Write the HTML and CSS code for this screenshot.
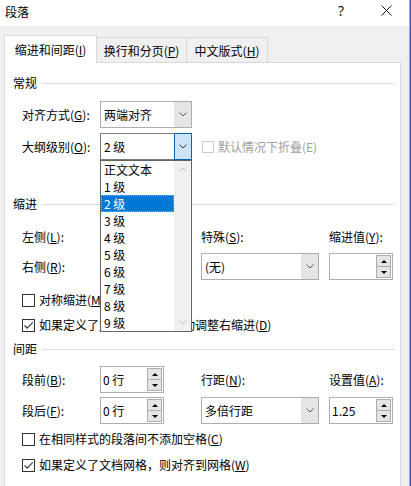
FILE: index.html
```html
<!DOCTYPE html>
<html lang="zh-CN">
<head>
<meta charset="utf-8">
<title>段落</title>
<link rel="stylesheet" href="styles.css">
</head>
<body>
<div class="dialog">
  <div class="titlebar">
    <span class="title">段落</span>
    <span class="tbtn help">?</span>
    <span class="tbtn close"><svg width="11" height="11" viewBox="0 0 11 11"><path d="M0.5 0.5L10.5 10.5M10.5 0.5L0.5 10.5" stroke="#111" stroke-width="1"/></svg></span>
  </div>
  <div class="client">
    <div class="tabs">
      <div class="tab active t1">缩进和间距(<u>I</u>)</div>
      <div class="tab t2">换行和分页(<u>P</u>)</div>
      <div class="tab t3">中文版式(<u>H</u>)</div>
    </div>
    <div class="panel">
      <div class="ghead"><span>常规</span><i></i></div>

      <div class="row r-align">
        <span class="lbl">对齐方式(<u>G</u>):</span>
        <div class="combo w92"><span class="val">两端对齐</span><span class="dd"><svg width="8" height="5" viewBox="0 0 8 5"><path d="M0.5 0.5L4 4L7.5 0.5" fill="none" stroke="#5c5c5c"/></svg></span></div>
      </div>

      <div class="row r-level">
        <span class="lbl">大纲级别(<u>O</u>):</span>
        <div class="combo w92 focus">
          <span class="val">2 级</span><span class="dd"><svg width="8" height="5" viewBox="0 0 8 5"><path d="M0.5 0.5L4 4L7.5 0.5" fill="none" stroke="#3a3a3a"/></svg></span>
          <div class="droplist">
            <div class="items">
              <div class="item">正文文本</div>
              <div class="item">1 级</div>
              <div class="item sel">2 级</div>
              <div class="item">3 级</div>
              <div class="item">4 级</div>
              <div class="item">5 级</div>
              <div class="item">6 级</div>
              <div class="item">7 级</div>
              <div class="item">8 级</div>
              <div class="item">9 级</div>
            </div>
            <div class="vscroll">
              <span class="sarrow"><svg width="8" height="5" viewBox="0 0 8 5"><path d="M0.5 4.5L4 1L7.5 4.5" fill="none" stroke="#c2c2c2"/></svg></span>
              <span class="sarrow"><svg width="8" height="5" viewBox="0 0 8 5"><path d="M0.5 0.5L4 4L7.5 0.5" fill="none" stroke="#c2c2c2"/></svg></span>
            </div>
          </div>
        </div>
        <div class="chk disabled collapse"><span class="box"></span><span>默认情况下折叠(E)</span></div>
      </div>

      <div class="ghead g-indent"><span>缩进</span><i></i></div>

      <div class="grid g1">
        <span class="lbl">左侧(<u>L</u>):</span>
        <div class="spin"><span class="val"></span><span class="btns"><span class="up"><b></b></span><span class="down"><b></b></span></span></div>
        <span></span>
        <span class="lbl">特殊(<u>S</u>):</span>
        <span></span>
        <span class="lbl">缩进值(<u>Y</u>):</span>

        <span class="lbl">右侧(<u>R</u>):</span>
        <div class="spin"><span class="val"></span><span class="btns"><span class="up"><b></b></span><span class="down"><b></b></span></span></div>
        <span></span>
        <div class="combo"><span class="val">(无)</span><span class="dd"><svg width="8" height="5" viewBox="0 0 8 5"><path d="M0.5 0.5L4 4L7.5 0.5" fill="none" stroke="#5c5c5c"/></svg></span></div>
        <span></span>
        <div class="spin"><span class="val"></span><span class="btns"><span class="up"><b></b></span><span class="down"><b></b></span></span></div>
      </div>

      <div class="chk c-mirror"><span class="box"></span><span>对称缩进(<u>M</u>)</span></div>
      <div class="chk c-auto"><span class="box checked"><svg width="11" height="11" viewBox="0 0 11 11"><path d="M1.5 5.5L4.2 8.2L9.8 2.4" fill="none" stroke="#333" stroke-width="1.1"/></svg></span><span>如果定义了文档网格，则自动调整右缩进(<u>D</u>)</span></div>

      <div class="ghead g-spacing"><span>间距</span><i></i></div>

      <div class="grid g2">
        <span class="lbl">段前(<u>B</u>):</span>
        <div class="spin"><span class="val">0 行</span><span class="btns"><span class="up"><b></b></span><span class="down"><b></b></span></span></div>
        <span></span>
        <span class="lbl">行距(<u>N</u>):</span>
        <span></span>
        <span class="lbl">设置值(<u>A</u>):</span>

        <span class="lbl">段后(<u>F</u>):</span>
        <div class="spin"><span class="val">0 行</span><span class="btns"><span class="up"><b></b></span><span class="down"><b></b></span></span></div>
        <span></span>
        <div class="combo"><span class="val">多倍行距</span><span class="dd"><svg width="8" height="5" viewBox="0 0 8 5"><path d="M0.5 0.5L4 4L7.5 0.5" fill="none" stroke="#5c5c5c"/></svg></span></div>
        <span></span>
        <div class="spin"><span class="val">1.25</span><span class="btns"><span class="up"><b></b></span><span class="down"><b></b></span></span></div>
      </div>

      <div class="chk c-nospace"><span class="box"></span><span>在相同样式的段落间不添加空格(<u>C</u>)</span></div>
      <div class="chk c-snap"><span class="box checked"><svg width="11" height="11" viewBox="0 0 11 11"><path d="M1.5 5.5L4.2 8.2L9.8 2.4" fill="none" stroke="#333" stroke-width="1.1"/></svg></span><span>如果定义了文档网格，则对齐到网格(<u>W</u>)</span></div>
    </div>
  </div>
</div>
</body>
</html>
```

FILE: styles.css
```css
* { box-sizing: border-box; }
html, body { margin: 0; padding: 0; }
body {
  width: 411px;
  height: 486px;
  overflow: hidden;
  background: #2a5ea8;
  font-family: "Noto Sans CJK SC", "Noto Sans", sans-serif;
  font-size: 12px;
  color: #000;
}
u { text-decoration: underline; text-underline-offset: 1px; }

.dialog {
  width: 410px;
  height: 486px;
  border-right: 1px solid #a9a9a9;
  background: #f0f0f0;
  display: flex;
  flex-direction: column;
}

/* title bar */
.titlebar {
  flex: none;
  height: 26px;
  background: #fff;
  display: flex;
  align-items: flex-start;
}
.title {
  flex: 1;
  padding-left: 5px;
  margin-top: 4px;
  line-height: 16px;
}
.tbtn {
  height: 21px;
  display: flex;
  align-items: center;
  justify-content: center;
}
.help {
  width: 46px;
  font-family: "Noto Sans", sans-serif;
  font-size: 14px;
  color: #111;
}
.close { width: 45px; }

/* client & tabs */
.client {
  flex: 1;
  padding-top: 9px;
  display: flex;
  flex-direction: column;
}
.tabs {
  display: flex;
  align-items: flex-end;
  height: 27px;
  padding-left: 4px;
}
.tab {
  height: 25px;
  border-top: 1px solid #d9d9d9;
  border-right: 1px solid #d9d9d9;
  background: #f0f0f0;
  padding-top: 5px;
  line-height: 16px;
  text-align: center;
  white-space: nowrap;
}
.tab.active {
  height: 28px;
  border-left: 1px solid #d9d9d9;
  background: #fff;
  padding-top: 6px;
  margin-bottom: -1px;
  position: relative;
  z-index: 1;
}
.t1 { width: 93px; }
.t2 { width: 90px; }
.t3 { width: 81px; }

.panel {
  flex: 1;
  margin-left: 4px;
  width: 397px;
  border: 1px solid #d9d9d9;
  border-bottom: none;
  background: #fff;
  padding: 12px 5px 0 8px;
}

/* group headings */
.ghead {
  display: flex;
  align-items: center;
  height: 16px;
  line-height: 16px;
}
.ghead i {
  flex: 1;
  height: 1px;
  background: #dcdcdc;
  margin-left: 5px;
}
.g-indent { margin-top: 36px; }
.g-spacing { margin-top: 6px; }

/* rows */
.row {
  display: flex;
  align-items: center;
  height: 27px;
  margin-left: 9px;
}
.r-align { margin-top: 10px; }
.r-level { margin-top: 5px; }
.lbl { width: 78px; line-height: 16px; white-space: nowrap; }
.grid .lbl { width: auto; }

.grid {
  display: grid;
  grid-template-columns: 78px 64px 37px 118px 10px 64px;
  grid-template-rows: 27px 27px;
  align-items: center;
  margin-left: 9px;
}
.g1 { margin-top: 11px; row-gap: 3px; }
.g2 { margin-top: 9px; row-gap: 4px; }

/* combo box */
.combo {
  position: relative;
  display: flex;
  height: 27px;
  border: 1px solid #adadad;
  background: #fff;
}
.w92 { width: 92px; }
.combo .val {
  flex: 1;
  padding-left: 3px;
  line-height: 25px;
  white-space: nowrap;
}
.combo .dd {
  width: 17px;
  background: #e5e5e5;
  display: flex;
  align-items: center;
  justify-content: center;
}
.combo.focus { border-color: #7a7a7a; }
.combo.focus .dd {
  width: 18px;
  margin: -1px -1px -1px 0;
  border: 1px solid #0a63b8;
  background: #cce4f7;
}

/* dropdown list */
.droplist {
  position: absolute;
  z-index: 5;
  left: -1px;
  top: calc(100% + 1px);
  width: 92px;
  height: 172px;
  border: 1px solid #646464;
  background: #fff;
  display: flex;
}
.items { flex: 1; }
.item {
  height: 17px;
  line-height: 17px;
  padding-left: 3px;
  white-space: nowrap;
}
.item.sel {
  background: #0078d7;
  color: #fff;
  outline: 1px dotted #f39a3c;
  outline-offset: -1px;
}
.vscroll {
  width: 17px;
  background: #f0f0f0;
  display: flex;
  flex-direction: column;
  justify-content: space-between;
}
.sarrow {
  height: 17px;
  display: flex;
  align-items: center;
  justify-content: center;
}

/* spin box */
.spin {
  display: flex;
  height: 27px;
  width: 64px;
  border: 1px solid #adadad;
  background: #fff;
}
.spin .val {
  flex: 1;
  padding-left: 2px;
  line-height: 25px;
  white-space: nowrap;
}
.btns {
  width: 15px;
  margin: 1px 1px 1px 0;
  display: flex;
  flex-direction: column;
}
.btns > span {
  flex: 1;
  background: #e5e5e5;
  border: 1px solid #adadad;
  display: flex;
  align-items: center;
  justify-content: center;
}
.btns > .down { border-top: none; }
.up b {
  width: 0; height: 0;
  border-left: 3px solid transparent;
  border-right: 3px solid transparent;
  border-bottom: 3px solid #000;
}
.down b {
  width: 0; height: 0;
  border-left: 3px solid transparent;
  border-right: 3px solid transparent;
  border-top: 3px solid #000;
}

/* check boxes */
.chk {
  display: flex;
  align-items: center;
  height: 20px;
  margin-left: 9px;
  line-height: 16px;
  white-space: nowrap;
}
.box {
  flex: none;
  width: 13px;
  height: 13px;
  border: 1px solid #333;
  background: #fff;
  margin-right: 4px;
  display: flex;
  align-items: center;
  justify-content: center;
}
.chk.disabled { color: #a0a0a0; }
.chk.disabled .box { border-color: #cccccc; width: 12px; height: 12px; }
.collapse { margin-left: 10px; }
.c-mirror { margin-top: 10px; }
.c-auto { margin-top: 5px; }
.c-nospace { margin-top: 5px; }
.c-snap { margin-top: 6px; }
```
